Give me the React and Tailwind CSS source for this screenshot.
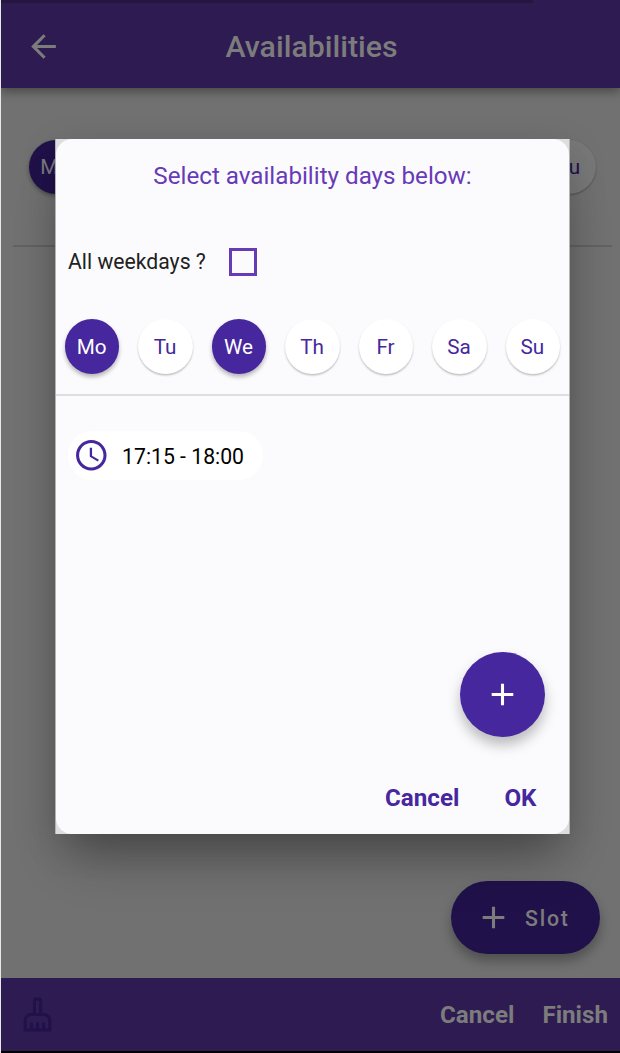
import { MdAccessTime, MdAdd, MdArrowBack, MdOutlineCleaningServices } from "react-icons/md";

const days = ["Mo", "Tu", "We", "Th", "Fr", "Sa", "Su"];
const selected = ["Mo", "We"];

function Day({ name, dimmed }) {
  const on = dimmed ? name === "Mo" : selected.includes(name);
  const look = dimmed
    ? on
      ? "bg-[#20114a] text-[#7c7c7c] shadow-[0_2px_4px_rgba(0,0,0,0.35)]"
      : "bg-[#787878] text-[#20114a] shadow-[0_1px_2px_rgba(0,0,0,0.3)]"
    : on
      ? "bg-[#46279e] text-white shadow-[0_3px_4px_rgba(0,0,0,0.28)]"
      : "bg-white text-[#46279e] shadow-[0_1.5px_2px_rgba(0,0,0,0.24)]";
  return (
    <div className={`flex size-[54.6px] shrink-0 items-center justify-center rounded-full pt-[2px] pr-px text-[20.7px] leading-none ${look}`}>
      {name}
    </div>
  );
}

function Dialog() {
  return (
    <section className="absolute top-[139px] left-[55px] h-[695px] w-[515px] border-x border-[#b4b4b6] bg-[#dedee0] shadow-[0_36px_48px_-14px_rgba(0,0,0,0.3),0_10px_36px_rgba(0,0,0,0.14)]">
      <div className="flex h-full flex-col rounded-[16px] bg-[#fbfbfe]">
        <h2 className="pt-[22px] text-center text-[24.2px] leading-[30px] text-[#673ab7]">
          Select availability days below:
        </h2>
        <label className="mt-[57px] flex h-[28px] items-center pl-3 text-[21.2px] leading-[28px] text-[#212121]">
          <span className="w-[161px]">All weekdays ?</span>
          <span className="size-[28px] border-3 border-[#673ab7]" />
        </label>
        <div className="mt-[43px] flex justify-between px-[8.8px]">
          {days.map((d) => (
            <Day key={d} name={d} />
          ))}
        </div>
        <hr className="mt-[20.4px] border-t-2 border-[#dedee1]" />
        <div className="mt-[35px] ml-[12px] flex h-[49px] w-[195px] items-center rounded-full bg-white pl-[5px]">
          <MdAccessTime className="size-[36.6px] shrink-0 text-[#46279e]" />
          <span className="ml-[12.5px] pt-[2px] text-[21.2px] leading-none whitespace-nowrap text-black">17:15 - 18:00</span>
        </div>
        <button className="mt-[172px] mr-[24px] flex size-[85px] items-center justify-center self-end rounded-full bg-[#46279e] text-white shadow-[0_8px_13px_rgba(0,0,0,0.26)]">
          <MdAdd className="size-[37px]" />
        </button>
        <div className="mt-[46px] mr-[32.5px] flex justify-end gap-[45px] text-[24.2px] leading-[30px] font-bold text-[#46279e]">
          <button>Cancel</button>
          <button>OK</button>
        </div>
      </div>
    </section>
  );
}

export default function App() {
  return (
    <div className="relative flex h-[1053px] w-[620px] flex-col overflow-hidden border-l border-[#e8e8e8] bg-[#717171] font-[Roboto,sans-serif]">
      <header className="flex h-[88px] shrink-0 flex-col bg-[#2e1b52] text-[#7c7c7c] shadow-[0_4px_9px_rgba(0,0,0,0.35)]">
        <div className="h-[3px] w-[532px] bg-[#25153f]" />
        <div className="grid h-[85px] grid-cols-[100px_1fr_100px] items-center pt-px">
          <MdArrowBack className="ml-6 size-[37px]" />
          <h1 className="pt-[2px] pl-[2px] text-center text-[30.3px] leading-none font-medium">Availabilities</h1>
        </div>
      </header>
      <main className="flex grow flex-col">
        <div className="mt-[51.5px] flex justify-between pr-[24px] pl-[27.5px]">
          <Day name="Mo" dimmed />
          <Day name="Su" dimmed />
        </div>
        <hr className="mt-[51px] mr-2 ml-3 border-t-2 border-[#626262]" />
        <button className="mt-auto mr-5 mb-6 flex h-[73px] w-[149px] items-center self-end rounded-full bg-[#20114a] pl-[24px] text-[#7c7c7c] shadow-[0_7px_12px_rgba(0,0,0,0.3)]">
          <MdAdd className="size-[37px] shrink-0" />
          <span className="ml-[13px] pt-[2px] text-[21.3px] leading-none font-medium tracking-[1.8px]">Slot</span>
        </button>
      </main>
      <footer className="flex h-[75px] shrink-0 items-center border-b-2 border-black bg-[#2e1b52] pr-3 pl-[18px] text-[24.2px] leading-none font-bold text-[#7c7c7c]">
        <MdOutlineCleaningServices className="size-[37px] text-[#20114a]" />
        <button className="ml-auto pt-[2px]">Cancel</button>
        <button className="ml-7 pt-[2px]">Finish</button>
      </footer>
      <div className="absolute inset-0 -left-px">
        <Dialog />
      </div>
    </div>
  );
}
